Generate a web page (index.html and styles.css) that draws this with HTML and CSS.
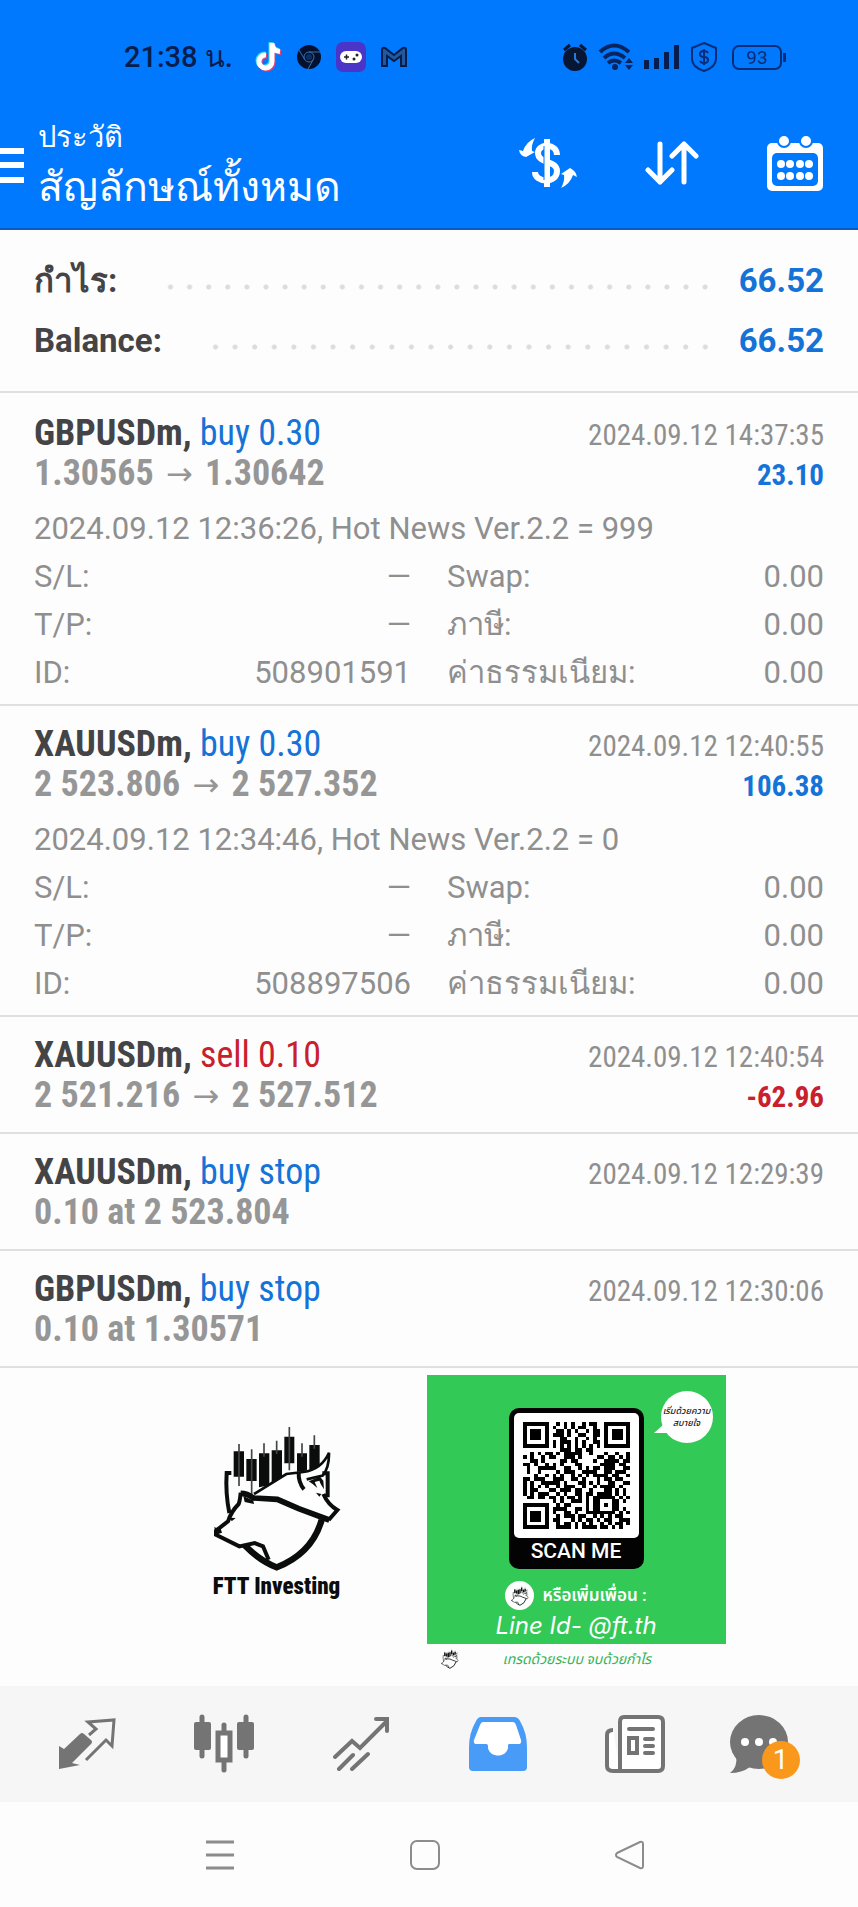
FILE: index.html
```html
<!DOCTYPE html>
<html lang="th">
<head>
    <meta charset="UTF-8">
    <meta name="viewport" content="width=device-width, initial-scale=1.0">
    <title>ประวัติ</title>
    <link rel="stylesheet" href="styles.css">
</head>
<body>
    <header class="header">
        <div class="status-bar">
            <div class="status-left">
                <span class="clock">21:38 น.</span>
                <svg width="28" height="30" viewBox="0 0 28 30">
                    <g fill="none" stroke-width="5">
                        <path d="M12 13a6.500 6.500 0 1 0 6 6.500V1c0 5 3 8 8 8.500" stroke="#35d6e0" transform="translate(-1 -1)"/>
                        <path d="M12 13a6.500 6.500 0 1 0 6 6.500V1c0 5 3 8 8 8.500" stroke="#e0457e" transform="translate(1 1)"/>
                        <path d="M12 13a6.500 6.500 0 1 0 6 6.500V1c0 5 3 8 8 8.500" stroke="#fff"/>
                    </g>
                </svg>
                <svg width="26" height="26" viewBox="0 0 26 26">
                    <circle cx="13" cy="13" r="12" fill="#03112e"/>
                    <g fill="none" stroke="#3a6fa8" stroke-width="1"><circle cx="13" cy="13" r="5"/><path d="M13 8h11M8.700 15.500L3 6M17.300 15.500L12 25"/></g>
                    <circle cx="13" cy="13" r="3" fill="#0a2f66"/>
                </svg>
                <svg width="30" height="30" viewBox="0 0 30 30">
                    <rect width="30" height="30" rx="7" fill="#4a35c8"/>
                    <rect x="4" y="9" width="22" height="12" rx="6" fill="#fff"/>
                    <path d="M8 15h5M10.500 12.500v5" stroke="#222" stroke-width="1.500"/>
                    <circle cx="18" cy="17" r="1.500" fill="#222"/><circle cx="21" cy="13" r="1.500" fill="#222"/>
                </svg>
                <svg width="28" height="22" viewBox="0 0 28 22">
                    <path d="M2 20V4q0-3 3-2l9 7 9-7q3-1 3 2v16h-5V10l-7 5-7-5v10z" fill="#23589c" stroke="#061d4e" stroke-width="2"/>
                </svg>
            </div>
            <div class="status-right">
                <svg width="26" height="28" viewBox="0 0 26 28">
                    <circle cx="13" cy="16" r="12" fill="#061633"/>
                    <path d="M2 7l6-5M24 7l-6-5" stroke="#061633" stroke-width="3"/>
                    <path d="M13 10v6l4 4" fill="none" stroke="#2a78d8" stroke-width="2"/>
                </svg>
                <svg width="36" height="28" viewBox="0 0 36 28" fill="none" stroke="#06245e" stroke-width="4">
                    <path d="M2 9q14-13 29 0M6 15q10-9 21 0M10 20q6-5 13 0"/>
                    <circle cx="17" cy="24" r="3" fill="#06245e" stroke="none"/>
                    <path d="M27 20l4-5 4 5zM27 22h8l-4 5z" fill="#06245e" stroke="none"/>
                </svg>
                <svg width="36" height="26" viewBox="0 0 36 26" fill="#061d4e">
                    <path d="M0 16h5v9H0zM10 14h5v11h-5zM20 8h5v17h-5zM30 1h5v24h-5z"/>
                </svg>
                <svg width="28" height="30" viewBox="0 0 28 30" fill="none" stroke="#0a2d78" stroke-width="2">
                    <path d="M14 1l12 5v11q0 8-12 12Q2 25 2 17V6z"/>
                    <path d="M18 11q-1-2-4-2-4 0-4 3t4 3 4 3-4 3q-3 0-4-2M14 7v16"/>
                </svg>
                <span class="battery">93</span>
            </div>
        </div>
        <div class="toolbar">
            <button class="icon-button menu-button" aria-label="เมนู">
                <svg width="24" height="36" viewBox="0 0 24 36" fill="#fff"><path d="M0 0h24v6H0zM0 14h24v6H0zM0 29h24v6H0z"/></svg>
            </button>
            <div class="titles">
                <p class="subtitle">ประวัติ</p>
                <h1 class="title">สัญลักษณ์ทั้งหมด</h1>
            </div>
            <div class="actions">
                <button class="icon-button" aria-label="สกุลเงิน">
                    <svg width="58" height="50" viewBox="0 0 58 50">
                        <path d="M38 17c0-12-19-12-19-2 0 11 19 7 19 18 0 13-22 12-22 1" fill="none" stroke="#fff" stroke-width="6"/>
                        <path d="M28 1v48" stroke="#fff" stroke-width="6"/>
                        <path d="M25 8v34" stroke="#0079ff" stroke-width="1"/>
                        <path d="M0 12l4 1q3-9 12-13-4 7-3 13l3 1-9 5q-6-1-7-7z" fill="#fff"/>
                        <path d="M58 39l-4-2q-3 9-12 13 4-7 3-13l-3-1 9-6q6 3 7 9z" fill="#fff"/>
                    </svg>
                </button>
                <button class="icon-button" aria-label="เรียงลำดับ">
                    <svg width="54" height="46" viewBox="0 0 54 46" fill="none" stroke="#fff" stroke-width="5" stroke-linecap="round" stroke-linejoin="round">
                        <path d="M15 4v38M3 30l12 12 12-12M39 42V4M27 16L39 4l12 12"/>
                    </svg>
                </button>
                <button class="icon-button" aria-label="ปฏิทิน">
                    <svg width="56" height="56" viewBox="0 0 56 56">
                        <rect y="8" width="56" height="48" rx="5" fill="#fff"/>
                        <g fill="#fff" stroke="#0079ff" stroke-width="2"><circle cx="17" cy="6" r="6"/><circle cx="39" cy="6" r="6"/></g>
                        <rect x="5" y="18" width="46" height="33" rx="5" fill="#0079ff"/>
                        <g fill="#fff">
                            <circle cx="14" cy="29" r="4"/><circle cx="23" cy="29" r="4"/><circle cx="33" cy="29" r="4"/><circle cx="42" cy="29" r="4"/>
                            <circle cx="14" cy="41" r="4"/><circle cx="23" cy="41" r="4"/><circle cx="33" cy="41" r="4"/><circle cx="42" cy="41" r="4"/>
                        </g>
                    </svg>
                </button>
            </div>
        </div>
    </header>

    <main>
        <dl class="summary">
            <div class="summary-row">
                <dt>กำไร:</dt>
                <dd>66.52</dd>
            </div>
            <div class="summary-row">
                <dt>Balance:</dt>
                <dd>66.52</dd>
            </div>
        </dl>

        <ul class="deals">
            <li class="deal">
                <div class="deal-line">
                    <span class="symbol">GBPUSDm, <span class="buy">buy 0.30</span></span>
                    <time class="date">2024.09.12 14:37:35</time>
                </div>
                <div class="deal-line">
                    <span class="price">1.30565 <span class="arrow">→</span> 1.30642</span>
                    <span class="profit buy">23.10</span>
                </div>
                <p class="comment">2024.09.12 12:36:26, Hot News Ver.2.2 = 999</p>
                <dl class="details">
                    <div><dt>S/L:</dt><dd>—</dd></div>
                    <div><dt>Swap:</dt><dd>0.00</dd></div>
                    <div><dt>T/P:</dt><dd>—</dd></div>
                    <div><dt>ภาษี:</dt><dd>0.00</dd></div>
                    <div><dt>ID:</dt><dd>508901591</dd></div>
                    <div><dt>ค่าธรรมเนียม:</dt><dd>0.00</dd></div>
                </dl>
            </li>
            <li class="deal">
                <div class="deal-line">
                    <span class="symbol">XAUUSDm, <span class="buy">buy 0.30</span></span>
                    <time class="date">2024.09.12 12:40:55</time>
                </div>
                <div class="deal-line">
                    <span class="price">2 523.806 <span class="arrow">→</span> 2 527.352</span>
                    <span class="profit buy">106.38</span>
                </div>
                <p class="comment">2024.09.12 12:34:46, Hot News Ver.2.2 = 0</p>
                <dl class="details">
                    <div><dt>S/L:</dt><dd>—</dd></div>
                    <div><dt>Swap:</dt><dd>0.00</dd></div>
                    <div><dt>T/P:</dt><dd>—</dd></div>
                    <div><dt>ภาษี:</dt><dd>0.00</dd></div>
                    <div><dt>ID:</dt><dd>508897506</dd></div>
                    <div><dt>ค่าธรรมเนียม:</dt><dd>0.00</dd></div>
                </dl>
            </li>
            <li class="deal">
                <div class="deal-line">
                    <span class="symbol">XAUUSDm, <span class="sell">sell 0.10</span></span>
                    <time class="date">2024.09.12 12:40:54</time>
                </div>
                <div class="deal-line">
                    <span class="price">2 521.216 <span class="arrow">→</span> 2 527.512</span>
                    <span class="profit sell">-62.96</span>
                </div>
            </li>
            <li class="deal">
                <div class="deal-line">
                    <span class="symbol">XAUUSDm, <span class="buy">buy stop</span></span>
                    <time class="date">2024.09.12 12:29:39</time>
                </div>
                <div class="deal-line">
                    <span class="price">0.10 at 2 523.804</span>
                </div>
            </li>
            <li class="deal">
                <div class="deal-line">
                    <span class="symbol">GBPUSDm, <span class="buy">buy stop</span></span>
                    <time class="date">2024.09.12 12:30:06</time>
                </div>
                <div class="deal-line">
                    <span class="price">0.10 at 1.30571</span>
                </div>
            </li>
        </ul>

        <section class="promo">
            <div class="brand">
                <svg width="132" height="146" viewBox="275 170 396 438">
                    <g id="emblem">
                        <path d="M343 246h31v76h-31zM381 269h31v66h-31zM419 252h31v96l-31 6zM457 243h31v90l-31 20zM495 202h30v80h-30zM533 252h30v60h-30zM570 227h31v62l-31 20z" fill="#0b0d0d"/>
                        <path d="M359 224v126M397 240v136M434 222v40M472 214v40M510 173v130M548 222v40M585 198v40" stroke="#444" stroke-width="5"/>
                        <path d="M336 311h-14q-4 60 8 120" fill="none" stroke="#0b0d0d" stroke-width="12"/>
                        <path d="M376 528q45 46 96 66 108-42 136-146" fill="none" stroke="#0b0d0d" stroke-width="19"/>
                        <path d="M398 376Q450 345 502 313L545 306Q607 300 629 250L613 312 622 392 655 424 627 453 590 448 480 396z" fill="#fff"/>
                        <path d="M404 374L501 314 552 308Q607 300 629 250 630 295 610 319L562 330" fill="none" stroke="#0b0d0d" stroke-width="8"/>
                        <path d="M538 310q-1 30 16 50M609 312h16v72M612 374q14 32 42 48l-26 30" fill="none" stroke="#0b0d0d" stroke-width="12"/>
                        <path d="M568 336l34-14 10 12 2 26-10-16-4-10-14 4 8 18-14-12z" fill="#0b0d0d"/>
                        <path d="M590 370l16 4-6 8z" fill="#0b0d0d"/>
                        <path d="M364 372q20 0 38 14l72 4 64 28 92 34" fill="none" stroke="#0b0d0d" stroke-width="17"/>
                        <path d="M364 370q-2 24-6 34-22 22-32 52l-36 28v12l70 35 46-10 25 10 17 40" fill="none" stroke="#0b0d0d" stroke-width="12"/>
                        <path d="M372 380l30 14 2 10-28-6z" fill="#0b0d0d"/>
                        <path d="M332 445l17 1-12 10zM284 474l20 4 4 12-14 5z" fill="#0b0d0d"/>
                    </g>
                </svg>
                <p class="brand-name">FTT Investing</p>
            </div>
            <div class="card">
                <div class="card-body">
                    <p class="bubble">เริ่มด้วยความ<br>สบายใจ</p>
                    <div class="qr-frame">
                        <svg id="qr" class="qr" viewBox="0 0 29 29" shape-rendering="crispEdges"></svg>
                        <p class="scan">SCAN ME</p>
                    </div>
                    <div class="add-friend">
                        <span class="avatar"><svg width="18" height="20" viewBox="275 170 396 438"><use href="#emblem"/></svg></span>
                        <p>หรือเพิ่มเพื่อน :</p>
                    </div>
                    <p class="line-id">Line Id- @ft.th</p>
                </div>
                <div class="card-foot">
                    <svg width="18" height="20" viewBox="275 170 396 438"><use href="#emblem"/></svg>
                    <p>เทรดด้วยระบบ จบด้วยกำไร</p>
                </div>
            </div>
        </section>
    </main>

    <nav class="tabs">
        <a href="#quotes" aria-label="ราคา">
            <svg width="58" height="52" viewBox="0 0 58 52">
                <path d="M1 28l5 3 16-15q2-2 4 0l7 6q2 2 0 4L14 45l8 2-21 4z" fill="#747474"/>
                <path d="M31 17l7-6-8-7 26-2-2 26-6-6-20 20" fill="none" stroke="#747474" stroke-width="3"/>
            </svg>
        </a>
        <a href="#chart" aria-label="กราฟ">
            <svg width="60" height="60" viewBox="0 0 60 60" fill="#747474">
                <rect y="8" width="17" height="28" rx="2"/><rect x="43" y="8" width="17" height="28" rx="2"/>
                <path d="M8 3v39M52 3v39M30 11v8M30 46v10" stroke="#747474" stroke-width="5" stroke-linecap="round"/>
                <rect x="24" y="19" width="12" height="27" fill="#fff" stroke="#747474" stroke-width="5"/>
            </svg>
        </a>
        <a href="#trade" aria-label="ซื้อขาย">
            <svg width="58" height="54" viewBox="0 0 58 54" fill="none" stroke="#747474" stroke-width="4" stroke-linecap="round">
                <path d="M3 40l17-16 8 7L55 4M44 2h11v12M7 52l14-14M20 52l16-15"/>
            </svg>
        </a>
        <a href="#history" aria-label="ประวัติ">
            <svg width="58" height="54" viewBox="0 0 58 54">
                <path d="M12 0h33q4 0 6 4 7 12 7 26v20q0 4-4 4H4q-4 0-4-4V30Q0 16 7 4q2-4 5-4z" fill="#489cf8"/>
                <path d="M14 5h30q2 0 3 3l5 15q1 4-3 4H40c-1 0-1 2-1 4-2 10-18 10-20 0 0-3 0-4-2-4H8q-4 0-3-4l6-15q1-3 3-3z" fill="#fff"/>
            </svg>
        </a>
        <a href="#news" aria-label="ข่าว">
            <svg width="60" height="58" viewBox="0 0 60 58">
                <path d="M8 15q-6 0-6 5v31q0 5 6 5h45q5 0 5-5V7q0-5-5-5H19q-4 0-4 5v49" fill="#fff" stroke="#747474" stroke-width="4"/>
                <path d="M24 14h24M40 24h8M40 31h8M40 38h8" stroke="#747474" stroke-width="4" stroke-linecap="round"/>
                <rect x="24" y="23" width="8" height="15" fill="#fff" stroke="#747474" stroke-width="4"/>
            </svg>
        </a>
        <a class="messages" href="#messages" aria-label="ข้อความ 1">
            <svg width="58" height="58" viewBox="0 0 58 58">
                <ellipse cx="29" cy="27" rx="29" ry="27" fill="#747474"/>
                <path d="M6 40q2 12-6 18 12 0 20-6z" fill="#747474"/>
                <g fill="#fff"><circle cx="15" cy="27" r="4"/><circle cx="29" cy="27" r="4"/><circle cx="43" cy="27" r="4"/></g>
            </svg>
            <span class="badge">1</span>
        </a>
    </nav>

    <div class="system-nav">
        <button class="icon-button" aria-label="ล่าสุด">
            <svg width="30" height="30" viewBox="0 0 30 30" stroke="#8c8c8c" stroke-width="3"><path d="M1 2h28M1 15h28M1 28h28"/></svg>
        </button>
        <button class="icon-button" aria-label="หน้าหลัก">
            <svg width="30" height="30" viewBox="0 0 30 30" fill="none" stroke="#8c8c8c" stroke-width="2"><rect x="1" y="1" width="28" height="28" rx="6"/></svg>
        </button>
        <button class="icon-button" aria-label="กลับ">
            <svg width="30" height="30" viewBox="0 0 30 30" fill="none" stroke="#8c8c8c" stroke-width="2"><path d="M2 13L25 2q3-1 3 2v22q0 3-3 2L2 17q-2-2 0-4z"/></svg>
        </button>
    </div>

    <script src="qr.js"></script>
</body>
</html>
```
FILE: styles.css
```css
* {
    box-sizing: border-box;
}

body {
    margin: 0;
    font-family: Roboto, "Noto Sans", sans-serif;
    background-color: #fdfdfd;
    color: #8f8f8f;
}

p, h1, dl, dd, ul {
    margin: 0;
    padding: 0;
}

svg {
    display: block;
    flex: none;
}

.icon-button {
    padding: 0;
    border: none;
    background: none;
    cursor: pointer;
}

/* Header */
.header {
    background-color: #0079ff;
    border-bottom: 2px solid #0c5cc0;
    color: white;
}

.status-bar {
    display: flex;
    justify-content: space-between;
    align-items: center;
    height: 114px;
    padding: 0 72px 0 124px;
}

.status-left, .status-right {
    display: flex;
    align-items: center;
}

.status-left {
    gap: 14px;
}

.status-right {
    gap: 10px;
}

.clock {
    min-width: 116px;
    font-size: 29px;
    font-weight: 500;
    color: #061d4e;
}

.battery {
    position: relative;
    width: 50px;
    height: 25px;
    margin: 0 4px;
    border: 2px solid #0a2d78;
    border-radius: 7px;
    font-size: 19px;
    line-height: 21px;
    text-align: center;
    color: #0a2d78;
}

.battery::after {
    content: "";
    position: absolute;
    top: 6px;
    right: -6px;
    width: 3px;
    height: 9px;
    background-color: #0a2d78;
}

.toolbar {
    display: flex;
    align-items: flex-start;
    height: 114px;
}

.menu-button {
    margin: 34px 14px 0 0;
}

.titles {
    flex: 1;
}

.subtitle {
    font-size: 29px;
    line-height: 46px;
}

.title {
    font-size: 41px;
    font-weight: 400;
    line-height: 54px;
}

.actions {
    display: flex;
    align-items: center;
    gap: 68px;
    padding: 21px 35px 0 0;
}

/* Profit and balance */
.summary {
    padding: 21px 34px 20px;
    border-bottom: 2px solid #e0e0e0;
    font-size: 33px;
    font-weight: 700;
    line-height: 60px;
}

.summary-row {
    display: flex;
    align-items: center;
    height: 60px;
}

.summary-row dt {
    color: #444446;
}

.summary-row dd {
    flex: 1;
    display: flex;
    align-items: center;
    color: #1573d8;
}

.summary-row dd::before {
    content: "";
    flex: 1;
    height: 6px;
    margin: 12px 24px 0 44px;
    background: radial-gradient(circle, #dcdcdc 2px, transparent 3px) right / 19px 6px space;
}

/* Deals */
.deals {
    list-style-type: none;
}

.deal {
    padding: 18px 34px 17px;
    border-bottom: 2px solid #e0e0e0;
    font-family: "Roboto Condensed", Roboto, "Noto Sans", sans-serif;
}

.deal:first-child {
    padding-top: 20px;
}

.deal-line {
    display: flex;
    justify-content: space-between;
    align-items: baseline;
    height: 40px;
    line-height: 40px;
}

.symbol {
    font-size: 36px;
    font-weight: 700;
    color: #444446;
}

.symbol span {
    font-weight: 400;
}

.price {
    font-size: 36px;
    font-weight: 700;
    color: #969696;
}

.arrow {
    margin: 0 4px;
    font-family: "DejaVu Sans", sans-serif;
    font-size: 32px;
    font-weight: 400;
    line-height: 24px;
}

.date {
    font-size: 29px;
}

.profit {
    font-size: 29px;
    font-weight: 700;
}

.symbol .buy, .profit.buy {
    color: #1573d8;
}

.symbol .sell, .profit.sell {
    color: #c8202c;
}

.comment {
    margin-top: 12px;
    font-family: Roboto, "Noto Sans", sans-serif;
    font-size: 31px;
    line-height: 48px;
}

.details {
    display: grid;
    grid-template-columns: 1fr 1fr;
    column-gap: 36px;
    margin-bottom: -10px;
    font-family: Roboto, "Noto Sans", sans-serif;
    font-size: 31px;
    line-height: 48px;
}

.details div {
    display: flex;
    justify-content: space-between;
    height: 48px;
}

/* Promo banner */
.promo {
    display: flex;
    justify-content: center;
    padding: 7px 6px 12px 0;
    font-family: Roboto, "Noto Sans Thai", "Noto Sans", sans-serif;
    color: #0b0d0d;
}

.brand {
    display: flex;
    flex-direction: column;
    align-items: center;
    width: 300px;
    padding-top: 51px;
}

.brand-name {
    font-family: "Roboto Condensed", Roboto, sans-serif;
    font-size: 23px;
    font-weight: 900;
    line-height: 30px;
}

.card {
    width: 299px;
}

.card-body {
    position: relative;
    display: flex;
    flex-direction: column;
    align-items: center;
    height: 269px;
    padding-top: 33px;
    background-color: #33c957;
    color: white;
}

.bubble {
    position: absolute;
    top: 16px;
    right: 13px;
    width: 52px;
    height: 52px;
    padding-top: 14px;
    border-radius: 50%;
    background-color: white;
    font-size: 9px;
    font-style: italic;
    font-weight: 500;
    line-height: 12px;
    text-align: center;
    white-space: nowrap;
    color: #222;
}

.bubble::before {
    content: "";
    position: absolute;
    left: -7px;
    bottom: 10px;
    border-top: 16px solid transparent;
    border-right: 18px solid white;
}

.qr-frame {
    width: 135px;
    padding: 5px;
    border-radius: 10px;
    background-color: #030303;
}

.qr {
    width: 125px;
    height: 125px;
    padding: 9px;
    border-radius: 5px;
    background-color: white;
}

.scan {
    font-size: 21px;
    font-weight: 500;
    line-height: 26px;
    text-align: center;
}

.add-friend {
    display: flex;
    align-items: center;
    gap: 8px;
    margin-top: 12px;
    font-size: 17px;
    font-weight: 600;
    line-height: 29px;
}

.avatar {
    display: flex;
    align-items: center;
    justify-content: center;
    width: 29px;
    height: 29px;
    border-radius: 50%;
    background-color: white;
}

.line-id {
    font-family: Inter, sans-serif;
    font-size: 24px;
    font-style: italic;
    line-height: 32px;
}

.card-foot {
    display: flex;
    align-items: center;
    gap: 44px;
    height: 30px;
    padding: 0 14px;
    font-size: 14px;
    font-style: italic;
    line-height: 30px;
    color: #33b457;
}

/* Bottom tabs */
.tabs {
    display: grid;
    grid-template-columns: repeat(6, 1fr);
    justify-items: center;
    align-items: center;
    height: 116px;
    padding: 0 18px;
    background-color: #f6f6f6;
}

.messages {
    position: relative;
    padding-right: 26px;
}

.badge {
    position: absolute;
    right: 14px;
    bottom: -6px;
    width: 38px;
    height: 38px;
    border-radius: 50%;
    background-color: #fa981c;
    font-size: 28px;
    line-height: 38px;
    text-align: center;
    color: white;
}

/* Android buttons */
.system-nav {
    display: grid;
    grid-template-columns: repeat(3, 1fr);
    justify-items: center;
    align-items: center;
    height: 105px;
    padding: 0 126px 0 117px;
}
```
FILE: qr.js
```js
const rows = [
    '#######..#.#.#..#.##..#######',
    '#.....#.#..#.#.##..#..#.....#',
    '#.###.#..##.#.#..#.##.#.###.#',
    '#.###.#.###.#..##..##.#.###.#',
    '#.###.#...##..#..#.#..#.###.#',
    '#.....#.#.###.#.#..##.#.....#',
    '#######.#.#.#.#.#.#.#.#######',
    '..........###.##.##..........',
    '..#.#.##.#.#####..#...#..#..#',
    '#.#..#.##..###.#....##.##.#.#',
    '..##.#....##.##....#..####.##',
    '##.#..#.#.#...##.....####.##.',
    '.#..#####..##..#.#.##.###..##',
    '.#..#....#.###..####..##.###.',
    '...#..#.#.#..#.#.#.####.##..#',
    '##.###..###..##.#...#.##.##..',
    '#.#..#####.#...##.#.#..##..##',
    '#.#.#.#..#.###..#..#.####.#..',
    '#.##...##.###.##..#...##.#.#.',
    '#.#.###..#.#..##.##.####.#.#.',
    '.##.##.##.#.##.#.#.######.#.#',
    '........#.#..###.#.##...##.#.',
    '#######..#.##....#.##.#.##...',
    '#.....#.####..##.#.##...##.#.',
    '#.###.#.#..##.#..########.#.#',
    '#.###.#..#.###.##..#.#.#.##..',
    '#.###.#.##...#.#.##.#.##..###',
    '#.....#..#.##.#.#.#..#.#.##.#',
    '#######..####.#.####.##.#.#..'
];

const qr = document.getElementById('qr');
const path = document.createElementNS('http://www.w3.org/2000/svg', 'path');
let d = '';
rows.forEach((row, y) => {
    for (let x = 0; x < row.length; x++) {
        if (row[x] === '#') {
            d += `M${x} ${y}h1v1h-1z`;
        }
    }
});
path.setAttribute('d', d);
qr.appendChild(path);
```
